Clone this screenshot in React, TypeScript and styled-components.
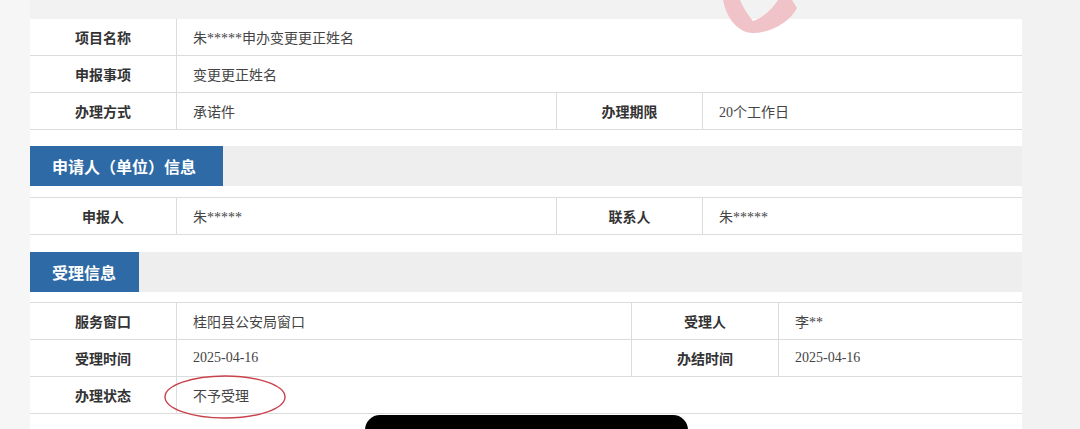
import React from "react";
import styled, { createGlobalStyle } from "styled-components";

const GlobalStyle = createGlobalStyle`
    html, body {
        margin: 0;
        padding: 0;
        background: #f2f2f2;
        font-family: "Liberation Serif", "Noto Sans CJK SC", serif;
        overflow: hidden;
    }
`

const Page = styled.div`
    width: 1080px;
    height: 429px;
    position: relative;
    overflow: hidden;
    background: linear-gradient(to right, #f6f6f6 0, #f6f6f6 30px, #f2f2f2 30px);
`

const Panel = styled.div`
    width: 992px;
    margin-left: 30px;
    padding-top: 19px;
    display: flex;
    flex-direction: column;
`

const Block = styled.div<{ $top?: number; $bottom?: number }>`
    background: #fff;
    padding-top: ${p => p.$top ?? 0}px;
    padding-bottom: ${p => p.$bottom ?? 0}px;
`

const Rows = styled.div<{ $bordered?: boolean }>`
    display: flex;
    flex-direction: column;
    border-top: ${p => (p.$bordered ? "1px solid #dcdcdc" : "none")};
`

const Row = styled.div<{ $cols: string }>`
    display: grid;
    grid-template-columns: ${p => p.$cols};
    height: 36px;
    border-bottom: 1px solid #dcdcdc;
`

const Cell = styled.div<{ $label?: boolean }>`
    position: relative;
    display: flex;
    align-items: center;
    justify-content: ${p => (p.$label ? "center" : "flex-start")};
    padding-left: ${p => (p.$label ? 0 : 16)}px;
    border-right: 1px solid #dcdcdc;
    font-size: 14px;
    color: ${p => (p.$label ? "#333" : "#444")};
    font-weight: ${p => (p.$label ? 600 : 400)};
    &:last-child {
        border-right: none;
    }
`

const HeaderBand = styled.div`
    background: #eeeeee;
    height: 40px;
    display: flex;
`

const HeaderTab = styled.div<{ $width: number }>`
    width: ${p => p.$width}px;
    background: #2d6aa6;
    color: #fff;
    font-size: 16px;
    font-weight: 600;
    display: flex;
    align-items: center;
    padding-left: 22px;
    box-sizing: border-box;
`

const Circle = styled.svg`
    position: absolute;
    left: -14px;
    top: -3px;
    width: 124px;
    height: 46px;
    pointer-events: none;
`

const Stamp = styled.svg`
    position: absolute;
    left: 715px;
    top: 0;
    width: 85px;
    height: 36px;
`

const HomeBar = styled.div`
    position: absolute;
    left: 365px;
    top: 415px;
    width: 323px;
    height: 30px;
    background: #000;
    border-radius: 15px 15px 0 0;
`

const colsA = "147px 380px 146px 1fr"
const colsB = "147px 455px 147px 1fr"

const App = () => {
    return (
        <Page>
            <GlobalStyle />
            <Panel>
                <Block $bottom={16}>
                    <Rows>
                        <Row $cols="147px 1fr">
                            <Cell $label>项目名称</Cell>
                            <Cell>朱*****申办变更更正姓名</Cell>
                        </Row>
                        <Row $cols="147px 1fr">
                            <Cell $label>申报事项</Cell>
                            <Cell>变更更正姓名</Cell>
                        </Row>
                        <Row $cols={colsA}>
                            <Cell $label>办理方式</Cell>
                            <Cell>承诺件</Cell>
                            <Cell $label>办理期限</Cell>
                            <Cell>20个工作日</Cell>
                        </Row>
                    </Rows>
                </Block>
                <HeaderBand>
                    <HeaderTab $width={193}>申请人（单位）信息</HeaderTab>
                </HeaderBand>
                <Block $top={11} $bottom={17}>
                    <Rows $bordered>
                        <Row $cols={colsA}>
                            <Cell $label>申报人</Cell>
                            <Cell>朱*****</Cell>
                            <Cell $label>联系人</Cell>
                            <Cell>朱*****</Cell>
                        </Row>
                    </Rows>
                </Block>
                <HeaderBand>
                    <HeaderTab $width={109}>受理信息</HeaderTab>
                </HeaderBand>
                <Block $top={10} $bottom={20}>
                    <Rows $bordered>
                        <Row $cols={colsB}>
                            <Cell $label>服务窗口</Cell>
                            <Cell>桂阳县公安局窗口</Cell>
                            <Cell $label>受理人</Cell>
                            <Cell>李**</Cell>
                        </Row>
                        <Row $cols={colsB}>
                            <Cell $label>受理时间</Cell>
                            <Cell>2025-04-16</Cell>
                            <Cell $label>办结时间</Cell>
                            <Cell>2025-04-16</Cell>
                        </Row>
                        <Row $cols="147px 1fr">
                            <Cell $label>办理状态</Cell>
                            <Cell>
                                不予受理
                                <Circle viewBox="0 0 124 46">
                                    <ellipse cx="62" cy="23" rx="60" ry="21" fill="none" stroke="#c9434d" strokeWidth="1.4" />
                                </Circle>
                            </Cell>
                        </Row>
                    </Rows>
                </Block>
            </Panel>
            <Stamp viewBox="0 0 85 36">
                <path
                    d="M8 0 C12 20 24 33 38 33 C56 33 75 22 82 8 L77 0 L63 0 C57 10 47 18 38 21 C32 14 28 7 25 0 Z"
                    fill="#f0c3c8"
                />
            </Stamp>
            <HomeBar />
        </Page>
    )
}

export default App;
